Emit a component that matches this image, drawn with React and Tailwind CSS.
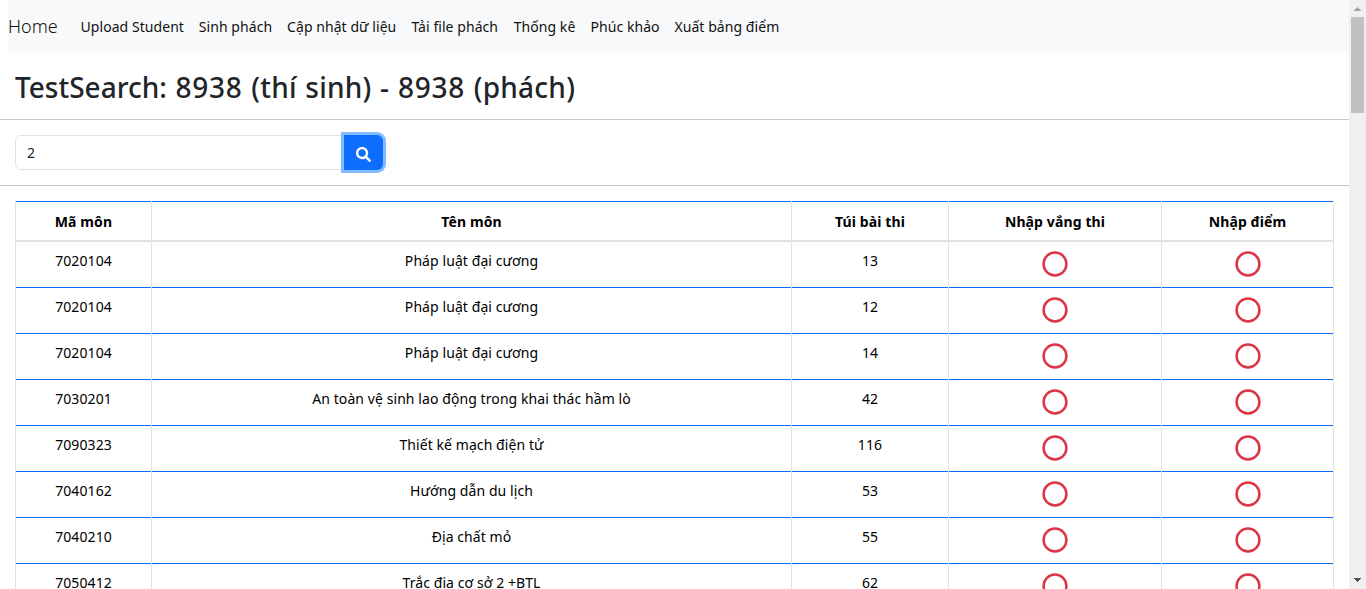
const NAV = [
  ["Upload Student", "w-[103.3px]"],
  ["Sinh phách", "w-[73.3px]"],
  ["Cập nhật dữ liệu", "w-[109.3px]"],
  ["Tải file phách", "w-[87.3px]"],
  ["Thống kê", "w-[61.8px]"],
  ["Phúc khảo", "w-[69px]"],
  ["Xuất bảng điểm", "w-[106px]"],
];

const HEADERS = ["Mã môn", "Tên môn", "Túi bài thi", "Nhập vắng thi", "Nhập điểm"];

const ROWS = [
  ["7020104", "Pháp luật đại cương", "13"],
  ["7020104", "Pháp luật đại cương", "12"],
  ["7020104", "Pháp luật đại cương", "14"],
  ["7030201", "An toàn vệ sinh lao động trong khai thác hầm lò", "42"],
  ["7090323", "Thiết kế mạch điện tử", "116"],
  ["7040162", "Hướng dẫn du lịch", "53"],
  ["7040210", "Địa chất mỏ", "55"],
  ["7050412", "Trắc địa cơ sở 2 +BTL", "62"],
];

const GRID = "grid grid-cols-[136px_640px_157px_213px_173px]";
const CELL = "border-l border-[#dee2e6] last:border-r";

function Circle() {
  return (
    <svg className="mx-auto mt-[9px] block" width="26" height="26" viewBox="0 0 26 26">
      <circle cx="13" cy="13" r="11.4" fill="none" stroke="#dc3545" strokeWidth="2.5" />
    </svg>
  );
}

function Scrollbar() {
  return (
    <div className="flex w-[17px] shrink-0 flex-col items-center bg-[#f0f0f0]">
      <svg className="h-[17px] w-[17px] shrink-0" viewBox="0 0 17 17" shapeRendering="crispEdges">
        <path d="M8 7h1v1h1v1h1v1h1v1H5v-1h1V9h1V8h1z" fill="#a3a3a3" />
      </svg>
      <div className="h-24 w-[13px] bg-[#c1c1c1]" />
      <div className="flex-1" />
      <svg className="h-[17px] w-[17px] shrink-0" viewBox="0 0 17 17" shapeRendering="crispEdges">
        <path d="M5 6h7v1h-1v1h-1v1H9v1H8V9H7V8H6V7H5z" fill="#505050" />
      </svg>
    </div>
  );
}

export default function App() {
  return (
    <div className="flex h-[589px] w-[1366px] overflow-hidden bg-white font-['Noto_Sans','Open_Sans',sans-serif] text-sm text-black">
      <div className="min-w-0 flex-1 overflow-hidden">
        <nav className="ml-2 flex h-[53px] items-center bg-[#f8f9fa]">
          <a className="w-[72.5px] text-[18px] font-light text-[#111]">Home</a>
          <div className="flex gap-[15px] tracking-[0.06px]">
            {NAV.map(([label, width]) => (
              <a key={label} className={`${width} whitespace-nowrap text-[#111]`}>{label}</a>
            ))}
          </div>
        </nav>
        <h1 className="h-[66px] whitespace-nowrap pl-[15px] pt-0.5 text-[28px] leading-[64px] font-medium text-[#212529]">
          TestSearch:
          <span className="tracking-[0.25px] [word-spacing:1px]">
            {" "}<span className="tracking-[0.8px]">8938</span> (thí sinh) - <span className="tracking-[0.8px]">8938</span> (phách)
          </span>
        </h1>
        <div className="flex h-[67px] border-y border-[#c8c9ca] pl-[15px] pt-[15px]">
          <div className="flex h-[35px] w-[329px] items-center rounded-l-md border border-[#dee2e6] pl-[11px] text-[#212529]">2</div>
          <button className="flex h-[35px] w-[39px] items-center justify-center rounded-r-md bg-[#0d6efd] pt-1 shadow-[0_0_0_3px_#82bbff]">
            <svg width="15" height="15" viewBox="0 0 512 512" fill="white">
              <path d="M505 442.700L405.300 343c-4.500-4.500-10.600-7-17-7H372c27.600-35.300 44-79.700 44-128C416 93.100 322.900 0 208 0S0 93.100 0 208s93.100 208 208 208c48.300 0 92.700-16.400 128-44v16.300c0 6.400 2.500 12.500 7 17l99.700 99.700c9.400 9.400 24.600 9.400 33.900 0l28.300-28.300c9.400-9.400 9.400-24.600.1-34zM208 336c-70.700 0-128-57.200-128-128 0-70.700 57.200-128 128-128 70.700 0 128 57.200 128 128 0 70.700-57.200 128-128 128z" />
            </svg>
          </button>
        </div>
        <div className="ml-[15px] mt-[15px] w-[1319px] text-center">
          <div className={GRID}>
            {HEADERS.map((h) => (
              <div key={h} className={CELL}>
                <div className="flex h-[41px] items-center justify-center border-t border-b-2 border-t-[#0d6efd] border-b-[#dee2e6] pt-0.5 font-bold tracking-[0.12px]">{h}</div>
              </div>
            ))}
          </div>
          {ROWS.map((row, i) => (
            <div key={i} className={GRID}>
              {row.map((text, j) => (
                <div key={j} className={CELL}>
                  <div className="h-[46px] border-b border-[#0d6efd] pt-[9px] tracking-[0.08px]">{text}</div>
                </div>
              ))}
              {[0, 1].map((k) => (
                <div key={k} className={CELL}>
                  <div className="h-[46px] overflow-hidden border-b border-[#0d6efd]"><Circle /></div>
                </div>
              ))}
            </div>
          ))}
        </div>
      </div>
      <Scrollbar />
    </div>
  );
}
